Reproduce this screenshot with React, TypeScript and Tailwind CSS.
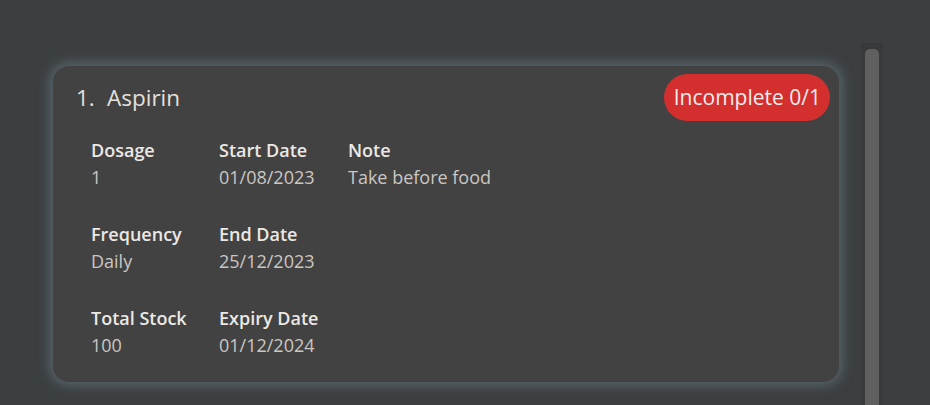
import React from 'react';

interface Field {
  label: string;
  value: string;
}

const columns: Field[][] = [
  [
    { label: 'Dosage', value: '1' },
    { label: 'Frequency', value: 'Daily' },
    { label: 'Total Stock', value: '100' },
  ],
  [
    { label: 'Start Date', value: '01/08/2023' },
    { label: 'End Date', value: '25/12/2023' },
    { label: 'Expiry Date', value: '01/12/2024' },
  ],
  [{ label: 'Note', value: 'Take before food' }],
];

const widths = ['w-[128px]', 'w-[129px]', 'w-[200px]'];

const App: React.FC = () => {
  return (
    <div
      className="w-[930px] h-[405px] overflow-hidden bg-[#3c3f41] flex"
      style={{ fontFamily: '"Open Sans", "Noto Sans", sans-serif' }}
    >
      <div className="w-[861px] pl-[53px] pt-[66px]">
        <div className="w-[786px] h-[316px] rounded-[16px] bg-[#424242] shadow-[0_0_12px_3px_#5a686e]">
          <div className="flex items-start justify-between pl-[23px] pr-[9px] pt-[8px]">
            <div className="text-[22.5px] text-[#e4e0dc] pt-[10px] leading-7 flex">
              <span className="w-[31px]">1.</span>
              <span>Aspirin</span>
            </div>
            <div className="h-[47px] pl-[10px] pr-[9px] rounded-full bg-[#d32f2f] text-[#f4ecec] text-[21px] flex items-center">
              Incomplete 0/1
            </div>
          </div>
          <div className="flex pl-[38px] pt-[16px]">
            {columns.map((col, i) => (
              <div key={i} className={`${widths[i]} flex flex-col gap-[30px]`}>
                {col.map((f) => (
                  <div key={f.label} className="flex flex-col text-[18px] leading-[27px]">
                    <span className="font-semibold text-[#ece8e4]">{f.label}</span>
                    <span className="text-[#cbc6c2]">{f.value}</span>
                  </div>
                ))}
              </div>
            ))}
          </div>
        </div>
      </div>
      <div className="pt-[43px]">
        <div className="w-[22px] h-[362px] bg-[#37393a] pt-[6px] px-[4px]">
          <div className="w-[14px] h-[360px] rounded-[5px] bg-[#5f5f5f]" />
        </div>
      </div>
    </div>
  );
};

export default App;
